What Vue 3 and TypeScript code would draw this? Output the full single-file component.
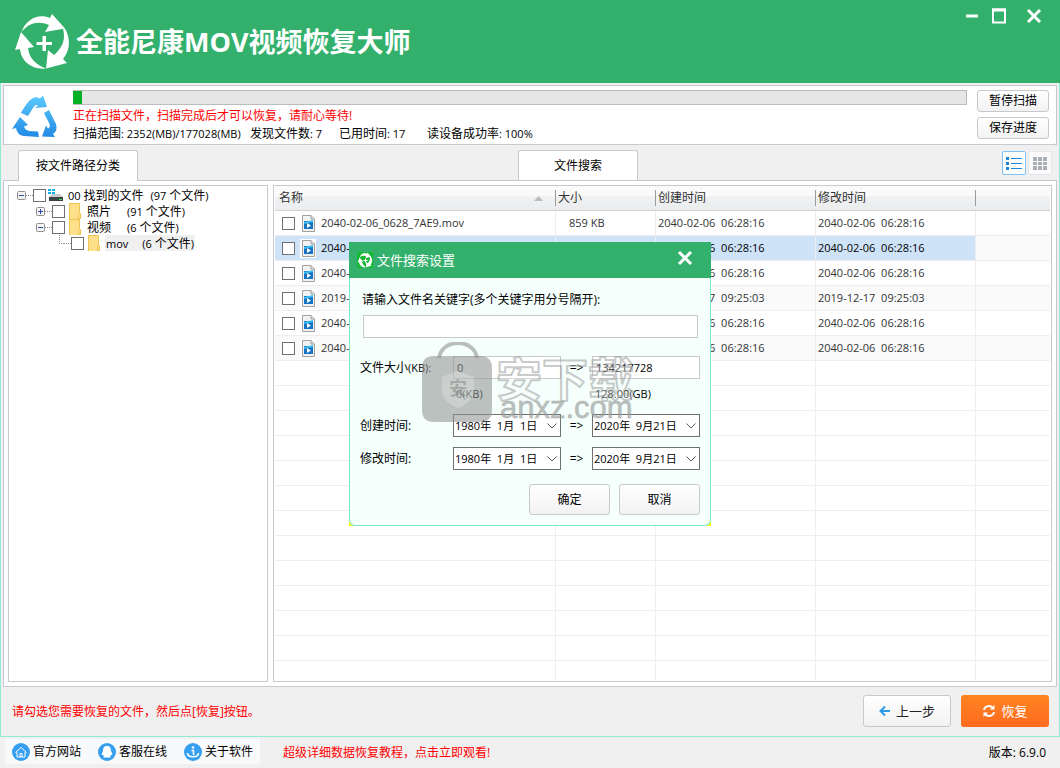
<script setup lang="ts">
import { h, ref } from 'vue'

interface TreeNode {
  label: string
  count: string
  level: number
  state: 'open' | 'closed' | 'leaf'
  drive?: boolean
  current?: boolean
}

interface FileRow {
  name: string
  size: string
  created: string
  modified: string
}

// Latin runs are set one step smaller than the Chinese text around them.
const Mix = (props: { t: string }) =>
  h(
    'span',
    { class: 'mix' },
    (props.t.match(/[\x20-\x7e\u00a0]+|[^\x20-\x7e\u00a0]+/g) ?? []).map((run) =>
      /^[\x20-\x7e\u00a0]/.test(run) ? h('span', { class: 'lat' }, run) : run,
    ),
  )
Mix.props = ['t']

const tree: TreeNode[] = [
  { label: '00 找到的文件', count: '(97 个文件)', level: 0, state: 'open', drive: true },
  { label: '照片', count: '(91 个文件)', level: 1, state: 'closed' },
  { label: '视频', count: '(6 个文件)', level: 1, state: 'open' },
  { label: 'mov', count: '(6 个文件)', level: 2, state: 'leaf', current: true },
]

const stamp = '2040-02-06\u00a0 06:28:16'
const older = '2019-12-17\u00a0 09:25:03'
const files: FileRow[] = [
  { name: '2040-02-06_0628_7AE9.mov', size: '859 KB', created: stamp, modified: stamp },
  { name: '2040-02-06.mov', size: '', created: stamp, modified: stamp },
  { name: '2040-02-06.mov', size: '', created: stamp, modified: stamp },
  { name: '2019-12-17.mov', size: '', created: older, modified: older },
  { name: '2040-02-06.mov', size: '', created: stamp, modified: stamp },
  { name: '2040-02-06.mov', size: '', created: stamp, modified: stamp },
]
const selected = ref(1)
const progress = ref(1)
const blanks = 13

const dateRows = [
  { id: 'created', label: '创建时间:' },
  { id: 'modified', label: '修改时间:' },
]
const fromDate = '1980年\u00a0 1月\u00a0 1日'
const toDate = '2020年\u00a0 9月21日'
const minSize = ref('0')
const maxSize = ref('134217728')
const keyword = ref('')
</script>

<template>
  <div class="app">
    <header class="top">
      <svg class="logo" viewBox="14 12 56 58">
        <g fill="#fff">
          <path d="M21.500 31C26 18 39 12 50 17L52 13L65 27.500L45 31L49 24C38 19.500 29 22 21.500 31Z" />
          <path d="M65 27.500C71 38 70 50 63 58L67 62L46 67.500L48 49L54 54C62 47 66 39 63 28Z" />
          <path d="M46 67.500C33 69 21 61 20 48L15 49L21 31L34 46L28 47C29 57 36 64 46 67.500Z" />
          <path d="M42.500 35h3.500v6h6v3h-6v6h-3.500v-6h-6v-3h6z" />
        </g>
      </svg>
      <h1>全能尼康MOV视频恢复大师</h1>
      <div class="win">
        <button aria-label="最小化"><svg width="14" height="16" viewBox="0 0 14 16"><path d="M1 8h12" stroke="#fff" stroke-width="3" /></svg></button>
        <button aria-label="最大化"><svg width="16" height="16" viewBox="0 0 16 16"><path d="M2 1.500h12v13h-12z" fill="none" stroke="#fff" stroke-width="2" /><path d="M1 2h14" stroke="#fff" stroke-width="3" /></svg></button>
        <button aria-label="关闭"><svg width="16" height="16" viewBox="0 0 16 16"><path d="M2 2l12 12M14 2L2 14" stroke="#fff" stroke-width="3" /></svg></button>
      </div>
    </header>

    <main class="body">
      <section class="scan">
        <svg class="recycle" viewBox="12 94 46 46">
          <defs>
            <linearGradient id="blue" x1="0" y1="95" x2="0" y2="138" gradientUnits="userSpaceOnUse">
              <stop offset="0" stop-color="#5ccbfc" /><stop offset="1" stop-color="#2289e4" />
            </linearGradient>
          </defs>
          <g fill="url(#blue)">
            <path d="M21 113C24 107 29 100 33 98Q36 96.500 40 98.500L43 95.500L47 107L35 108L38 105.500Q35 104 33 108L28 116Z" />
            <path d="M20 117L12 129L16 128Q17 135 24 136L39 137L38 131.500L29 131Q25 130 24 126.500L28 125Z" />
            <path d="M44 113L49 110L56 124Q58 131 53 134L55 137L42 136.500L46 125.500L48 128.500Q51 127 49 123Z" />
          </g>
        </svg>
        <div class="info">
          <div class="bar" role="progressbar" :aria-valuenow="progress"><div class="fill" :style="{ width: progress + '%' }"></div></div>
          <p class="red">正在扫描文件，扫描完成后才可以恢复，请耐心等待!</p>
          <p class="stats">
            <Mix t="扫描范围: 2352(MB)/177028(MB)" /><Mix t="发现文件数: 7" /><Mix t="已用时间: 17" /><Mix t="读设备成功率: 100%" />
          </p>
        </div>
        <div class="acts"><button class="btn">暂停扫描</button><button class="btn">保存进度</button></div>
      </section>

      <div class="tabs">
        <button class="tab">按文件路径分类</button>
        <button class="tab">文件搜索</button>
        <div class="views">
          <button class="view on" aria-label="列表">
            <svg width="16" height="14" viewBox="0 0 16 14" fill="#1b87dc"><path d="M0 1h3v3H0zM0 6h3v3H0zM0 11h3v3H0zM5 2h11v1H5zM5 7h11v1H5zM5 12h11v1H5z" /></svg>
          </button>
          <button class="view" aria-label="图标">
            <svg width="14" height="13" viewBox="0 0 14 13" fill="#aab0b5"><path d="M0 0h4v4H0zM5 0h4v4H5zM10 0h4v4h-4zM0 5h4v3H0zM5 5h4v3H5zM10 5h4v3h-4zM0 9h4v4H0zM5 9h4v4H5zM10 9h4v4h-4z" /></svg>
          </button>
        </div>
      </div>

      <section class="work">
        <ul class="tree">
          <li v-for="(n, i) in tree" :key="i" :class="'lv' + n.level">
            <button v-if="n.state !== 'leaf'" class="exp" :aria-label="n.label">
              <svg width="9" height="9" viewBox="0 0 9 9"><rect x=".5" y=".5" width="8" height="8" rx="1" fill="#f4f4f4" stroke="#919191" /><path d="M2 4.500h5" stroke="#2b4aa0" /><path v-if="n.state === 'closed'" d="M4.500 2v5" stroke="#2b4aa0" /></svg>
            </button>
            <span v-else class="elbow"></span>
            <span class="dots"></span>
            <input type="checkbox" :aria-label="n.label" />
            <svg v-if="n.drive" class="ico" viewBox="0 0 16 16"><path d="M0 2h3v2H0zM4 2h3v2H4zM0 5h3v2H0zM4 5h3v2H4z" fill="#12b0ec" /><path d="M4 7h8l3 3H1z" fill="#c9cccd" /><path d="M1 10h14v4H1z" fill="#3c4244" /><path d="M11 12h3v1h-3z" fill="#3be05c" /></svg>
            <svg v-else class="ico" viewBox="0 0 16 16"><path d="M2 0h11v10h1v6H2z" fill="#ffe08a" /><path d="M2.500 .5h10v9.500l1 1v4.500h-2v-4M2.500 0v16" fill="none" stroke="#eec452" /></svg>
            <span class="txt" :class="{ cur: n.current }"><Mix :t="n.label" /><Mix class="cnt" :t="n.count" /></span>
          </li>
        </ul>

        <div class="list">
          <table>
            <colgroup><col class="c1" /><col class="c2" /><col class="c3" /><col class="c3" /><col /></colgroup>
            <thead>
              <tr>
                <th><div class="th">名称<svg width="9" height="5" viewBox="0 0 9 5"><path d="M0 5L4.500 0L9 5z" fill="#bcbcbc" /></svg></div></th>
                <th><div class="th">大小</div></th>
                <th><div class="th">创建时间</div></th>
                <th><div class="th">修改时间</div></th>
                <th></th>
              </tr>
            </thead>
            <tbody>
              <tr v-for="(f, i) in files" :key="i" :class="{ sel: i === selected }" @click="selected = i">
                <td>
                  <label class="name">
                    <input type="checkbox" />
                    <svg class="file" width="16" height="19" viewBox="0 0 16 19"><path d="M0 0h16v19H0z" fill="#fff" /><path d="M2.500 1.500h8.500l3.500 3.500v12.500h-12z" fill="#f2f2f2" stroke="#a0a0a0" /><path d="M11 1.500v3.500h3.500" fill="#ddd" stroke="#a0a0a0" /><path d="M4 7h9v8H4z" fill="#1673c4" /><path d="M4 8l9-2v2L4 10z" fill="#3cbcf0" /><path d="M7 9l4 2.500L7 14z" fill="#fff" /></svg>
                    {{ f.name }}
                  </label>
                </td>
                <td class="size">{{ f.size }}</td>
                <td>{{ f.created }}</td>
                <td>{{ f.modified }}</td>
                <td></td>
              </tr>
              <tr v-for="b in blanks" :key="'b' + b" class="blank"><td></td><td></td><td></td><td></td><td></td></tr>
            </tbody>
          </table>
        </div>
      </section>

      <section class="foot">
        <p class="red">请勾选您需要恢复的文件，然后点[恢复]按钮。</p>
        <button class="btn big"><svg width="12" height="12" viewBox="0 0 12 12"><path d="M11 6H2M6 1.500L1.500 6L6 10.500" fill="none" stroke="#2f9be8" stroke-width="2" /></svg>上一步</button>
        <button class="go"><svg width="14" height="14" viewBox="0 0 14 14" fill="none" stroke="#fff" stroke-width="2"><path d="M2 6C2.500 2 8 .5 11 4M12 8C11.500 12 6 13.500 3 10" /><path d="M12.500 1v4.500H8zM1.500 13V8.500H6z" fill="#fff" stroke="none" /></svg>恢复</button>
      </section>
    </main>

    <footer class="bottom">
      <nav>
        <a href="#site"><svg viewBox="0 0 18 18"><circle cx="9" cy="9" r="9" fill="#379ff0" /><path d="M3.500 9.500L9 4.500l5.500 5M5 9v5h8V9M8 14v-3.500h2V14" fill="none" stroke="#fff" /></svg>官方网站</a>
        <a href="#service"><svg viewBox="0 0 18 18"><circle cx="9" cy="9" r="9" fill="#379ff0" /><path d="M9 3c3 0 4 2 4 5l1.500 3.500-1.500.5-1 1.500 1 1H9h-4l1-1L5 12l-1.500-.5L5 8c0-3 1-5 4-5z" fill="#fff" /></svg>客服在线</a>
        <a href="#about"><svg viewBox="0 0 18 18"><circle cx="9" cy="9" r="9" fill="#379ff0" /><path d="M7.500 7.500H9.500V12M3.500 10c0 5 11 5 11 0" fill="none" stroke="#fff" stroke-width="1.500" /><circle cx="9" cy="4.500" r="1.300" fill="#fff" /></svg>关于软件</a>
      </nav>
      <a class="red tour" href="#course">超级详细数据恢复教程，点击立即观看!</a>
      <span class="ver">版本: 6.9.0</span>
    </footer>

    <div class="dialog" role="dialog" aria-labelledby="dlg-title">
      <div class="dhead">
        <svg width="16" height="16" viewBox="12 10 60 60"><rect x="12" y="10" width="60" height="60" rx="6" fill="#14b833" /><g fill="#fff"><path d="M21.500 31C26 16 39 11 50 16L52 13L65 27.500L43 33L47 27C38 22 29 24 21.500 31Z" /><path d="M65 27.500C71 38 70 50 63 58L67 62L46 67.500L46 47L52 52C60 45 62 39 60 28Z" /><path d="M46 67.500C33 69 21 61 20 48L15 49L21 31L36 46L31 47C32 55 38 61 46 67.500Z" /><path d="M42 34h4v6h6v4h-6v6h-4v-6h-6v-4h6z" /></g></svg>
        <h2 id="dlg-title">文件搜索设置</h2>
        <button aria-label="关闭"><svg width="16" height="16" viewBox="0 0 16 16"><path d="M2 2l12 12M14 2L2 14" stroke="#fff" stroke-width="3" /></svg></button>
      </div>
      <form class="dbody" @submit.prevent>
        <label class="kl" for="kw">请输入文件名关键字(多个关键字用分号隔开):</label>
        <input id="kw" v-model="keyword" class="kw" type="text" />
        <div class="grid">
          <label for="min"><Mix t="文件大小(KB):" /></label>
          <input id="min" v-model="minSize" type="text" />
          <span class="arr">=&gt;</span>
          <input v-model="maxSize" type="text" aria-label="最大文件大小" />
        </div>
        <div class="grid hint"><span></span><span>0(KB)</span><span></span><span>128.00(GB)</span></div>
        <div v-for="d in dateRows" :key="d.id" class="grid date">
          <label :for="d.id">{{ d.label }}</label>
          <div class="pick"><select :id="d.id"><option>{{ fromDate }}</option></select><svg width="10" height="6" viewBox="0 0 10 6"><path d="M.5 .5L5 5L9.500 .5" fill="none" stroke="#555" /></svg></div>
          <span class="arr">=&gt;</span>
          <div class="pick"><select :aria-label="d.label"><option>{{ toDate }}</option></select><svg width="10" height="6" viewBox="0 0 10 6"><path d="M.5 .5L5 5L9.500 .5" fill="none" stroke="#555" /></svg></div>
        </div>
        <div class="dbtns"><button class="btn" type="submit">确定</button><button class="btn" type="button">取消</button></div>
      </form>
      <svg class="mark" width="216" height="84" viewBox="0 0 216 84" aria-hidden="true">
        <path d="M17 16C20 -4 52 -4 55 16" fill="none" stroke="#909593" stroke-opacity=".6" stroke-width="4" />
        <path d="M12 14h46q12 0 12 12v42q0 12-12 12H12q-12 0-12-12V26q0-12 12-12z" fill="#909593" fill-opacity=".58" />
        <path d="M36 29l16 6v13c0 9-7 14-16 18c-9-4-16-9-16-18V35z" fill="#fff" fill-opacity=".24" />
        <text x="36" y="53" class="mini" text-anchor="middle">安</text>
        <text x="74" y="54" class="outline">安下载</text>
        <text x="78" y="76" class="url">anxz.com</text>
      </svg>
    </div>
  </div>
</template>

<style>
html, body { margin: 0; background: #f0f0f0; }
.mix .lat { font-size: 11px; white-space: pre; }
</style>

<style scoped>
.app { position: relative; height: 100vh; min-height: 600px; display: flex; flex-direction: column; overflow: hidden; background: #f0f0f0; color: #000; font: 12px/18px "Open Sans", "Noto Sans CJK SC", sans-serif; }
.app * { box-sizing: border-box; }
button, input, select { font: inherit; color: inherit; margin: 0; padding: 0; }
button { background: none; border: 0; }
p, h1, h2, ul { margin: 0; padding: 0; }
.red { color: #f00; }
.top { flex: none; height: 83px; background: #33b16c; display: flex; align-items: center; padding-left: 14px; position: relative; }
.logo { width: 56px; height: 58px; }
h1 { margin-left: 6px; font-size: 27px; line-height: 40px; font-weight: 700; color: #fff; white-space: nowrap; }
.win { position: absolute; top: 8px; right: 18px; display: flex; gap: 12px; }
.win button, .win svg { display: block; height: 16px; }
.win button:last-child { margin-left: 7px; }
.body { flex: 1; min-height: 0; display: flex; flex-direction: column; border: 1px solid #8eecd6; border-top: 0; padding: 2px; }
.scan { flex: none; height: 60px; border: 1px solid #c8c9cd; background: #fff; display: flex; padding: 4px 7px 0 8px; }
.recycle { width: 46px; height: 46px; margin-top: 4px; }
.info { flex: 1; margin-left: 15px; }
.bar { height: 15px; border: 1px solid #bcbcbc; border-left: 0; background: #e6e6e6; margin-bottom: 2px; }
.fill { height: 13px; background: #06b025; }
.info p { line-height: 18px; white-space: nowrap; }
.stats { display: grid; grid-template-columns: 177px 89px 88px auto; }
.acts { width: 72px; margin-left: 10px; display: flex; flex-direction: column; gap: 5px; }
.btn { border: 1px solid #c8c9cd; border-radius: 3px; background: linear-gradient(#fff, #f2f2f2); }
.acts .btn { height: 22px; line-height: 18px; }
.tabs { flex: none; display: flex; align-items: flex-end; height: 36px; padding: 0 5px 0 15px; position: relative; z-index: 1; }
.tab { width: 120px; height: 31px; border: 1px solid #c8c9cd; border-bottom: 0; border-radius: 3px 3px 0 0; background: #fff; margin-right: 380px; }
.tab + .tab { margin-right: auto; height: 30px; margin-bottom: 1px; }
.views { display: flex; gap: 2px; padding-bottom: 6px; }
.view { width: 24px; height: 24px; border: 1px solid #e4e6e8; border-radius: 2px; background: #fafafa; display: flex; align-items: center; justify-content: center; }
.view.on { border-color: #7dc1f7; background: #fff; }
.work { flex: 1; min-height: 0; margin-top: -1px; border: 1px solid #c8c9cd; background: #fff; display: flex; gap: 5px; padding: 4px; }
.tree { flex: none; width: 260px; border: 1px solid #c8c9cd; list-style: none; padding: 1px 0 0 8px; }
.tree li { display: flex; align-items: center; height: 16px; white-space: nowrap; }
.lv1 { padding-left: 19px; }
.lv2 { padding-left: 42px; }
.exp, .exp svg { display: block; width: 9px; height: 9px; }
.elbow { width: 5px; height: 9px; border-left: 1px dotted #888; border-bottom: 1px dotted #888; margin-bottom: 8px; }
.dots { width: 7px; border-top: 1px dotted #888; }
input[type="checkbox"] { appearance: none; flex: none; width: 13px; height: 13px; border: 1px solid #707070; background: #fff; }
.ico { width: 16px; height: 16px; margin: 0 3px 0 2px; }
.txt { padding: 0 1px; display: flex; height: 16px; line-height: 18px; }
.txt.cur { background: #f0f0f0; }
.cnt { margin-left: 7px; }
.lv1 .cnt, .lv2 .cnt { margin-left: 16px; }
.lv2 .cnt { margin-left: 14px; }
.list { flex: 1; min-width: 0; min-height: 0; overflow: hidden; border: 1px solid #c8c9cd; padding: 0 1px; }
table { width: 100%; border-collapse: separate; border-spacing: 0; table-layout: fixed; }
.c1 { width: 281px; }
.c2 { width: 100px; }
.c3 { width: 160px; }
th { height: 25px; padding: 0; font-weight: 400; text-align: left; color: #333; border-bottom: 1px solid #d0d2d5; background: linear-gradient(#fafafa 40%, #f0f1f2 45%, #ebecee); }
.th { display: flex; align-items: center; justify-content: space-between; height: 16px; line-height: 18px; padding: 0 12px 0 2px; border-right: 1px solid #9a9a9a; }
th:first-child .th { padding-left: 4px; }
td { height: 25px; padding: 0 0 0 2px; font-size: 11px; line-height: 16px; color: #333; border-bottom: 1px solid #eee; border-right: 1px solid #eee; white-space: nowrap; overflow: hidden; }
td:last-child { border-right: 0; }
tbody tr:nth-child(even):not(.blank) td { background: #fafafa; }
tbody tr.sel td:not(:last-child) { background: #cfe3f8; color: #000; }
.name { display: flex; align-items: center; padding-left: 5px; }
.file { margin: 0 5px; }
.size { padding-left: 13px; }
.foot { flex: none; height: 47px; display: flex; align-items: center; gap: 10px; padding: 0 8px 0 9px; }
.foot .red { margin-right: auto; padding-top: 3px; }
.big, .go { width: 88px; height: 32px; font-size: 13px; display: flex; align-items: center; justify-content: center; gap: 5px; }
.big { color: #222; }
.go { border-radius: 3px; color: #fff; background: linear-gradient(#ff8420, #ff6a20); }
.bottom { flex: none; height: 31px; display: flex; align-items: center; padding: 0 14px 0 5px; }
nav { display: flex; gap: 17px; height: 25px; padding: 0 7px; background: #f7f9fa; align-items: center; margin-bottom: 2px; }
a { color: #000; text-decoration: none; display: flex; align-items: center; gap: 3px; }
nav svg { width: 18px; height: 18px; }
.bottom a.tour { color: #f00; margin: 0 auto 0 23px; }
.dialog { position: absolute; top: 242px; left: 50%; width: 362px; margin-left: -181px; background: linear-gradient(#33b16c 50%, #ff0 50%); }
.dhead { height: 36px; background: #33b16c; color: #fff; display: flex; align-items: center; padding: 0 18px 4px 8px; }
.dhead svg:first-child { margin-top: 4px; }
.dhead button svg:first-child { margin-top: 0; }
h2 { font-size: 13px; line-height: 18px; font-weight: 400; margin: 3px auto 0 4px; }
.dhead button, .dhead button svg { display: block; }
.dbody { border: 1px solid #7ee8cf; border-top: 0; border-radius: 0 0 6px 6px; background: #f5fffc; padding: 12px 10px 10px; }
.kl { display: block; line-height: 20px; margin-left: 2px; }
.dialog input { height: 23px; border: 1px solid #c8c9cd; background: #fff; font-size: 11px; padding: 0 3px; width: 100%; min-width: 0; outline: 0; }
.kw { display: block; margin: 5px 0 18px 3px; }
.dialog .kw { width: 335px; }
.grid { display: grid; grid-template-columns: 93px 108px 31px 108px; align-items: center; height: 23px; }
.arr { text-align: center; }
.hint { height: 30px; margin-bottom: 5px; font-size: 11px; }
.hint span { padding-left: 3px; }
.date { margin-bottom: 10px; }
.pick { position: relative; }
.pick select { appearance: none; display: block; width: 100%; height: 23px; border: 1px solid #707070; border-radius: 0; background: #fff; font-size: 11px; line-height: 18px; padding: 0 1px; }
.pick svg { position: absolute; right: 4px; top: 9px; pointer-events: none; }
.dbtns { display: flex; justify-content: flex-end; gap: 9px; margin-top: 14px; }
.dbtns .btn { width: 81px; height: 31px; }
.mark { position: absolute; left: 73px; top: 100px; pointer-events: none; }
.mark text { font-family: "Noto Sans CJK SC", sans-serif; font-weight: 700; }
.mark .mini { font-size: 18px; fill: #808583; fill-opacity: .5; }
.mark .outline { font-size: 46px; fill: #fff; fill-opacity: .3; stroke: #999e9c; stroke-opacity: .55; stroke-width: 2px; stroke-linejoin: round; }
.mark .url { font-family: "Liberation Sans", sans-serif; font-weight: 400; font-size: 31px; fill: #999e9c; fill-opacity: .65; stroke: #999e9c; stroke-opacity: .4; stroke-width: 1px; }
</style>
